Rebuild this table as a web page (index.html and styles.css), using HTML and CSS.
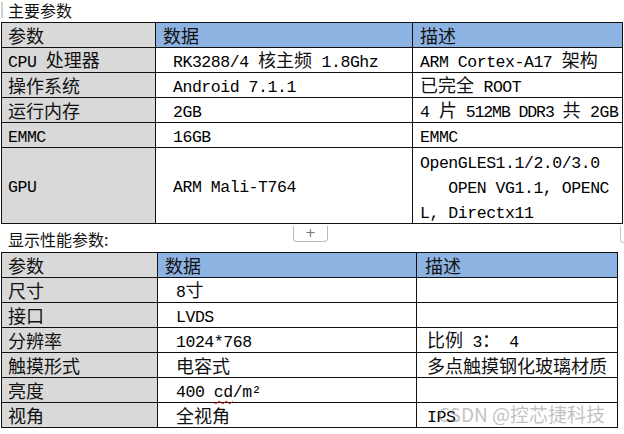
FILE: index.html
```html
<!DOCTYPE html>
<html lang="zh">
<head>
<meta charset="utf-8">
<title>参数</title>
<link rel="stylesheet" href="styles.css">
</head>
<body>
<div class="page">
  <div class="label first"><span class="bar"></span>主要参数</div>
  <table class="spec t1">
    <colgroup><col class="c1"><col class="c2"><col class="c3"></colgroup>
    <tr class="head"><th>参数</th><th>数据</th><th>描述</th></tr>
    <tr>
      <td class="k"><span class="en">CPU </span>处理器</td>
      <td class="v"><span class="en">RK3288/4 </span>核主频<span class="en"> 1.8Ghz</span></td>
      <td class="d"><span class="en">ARM Cortex-A17 </span>架构</td>
    </tr>
    <tr>
      <td class="k">操作系统</td>
      <td class="v"><span class="en">Android 7.1.1</span></td>
      <td class="d">已完全<span class="en"> ROOT</span></td>
    </tr>
    <tr>
      <td class="k">运行内存</td>
      <td class="v"><span class="en">2GB</span></td>
      <td class="d"><span class="en">4 </span>片<span class="en n"> 512MB DDR3 </span>共<span class="en"> 2GB</span></td>
    </tr>
    <tr>
      <td class="k"><span class="en">EMMC</span></td>
      <td class="v"><span class="en">16GB</span></td>
      <td class="d"><span class="en">EMMC</span></td>
    </tr>
    <tr class="tall">
      <td class="k"><span class="en">GPU</span></td>
      <td class="v"><span class="en">ARM Mali-T764</span></td>
      <td class="d multi"><span class="en">OpenGLES1.1/2.0/3.0</span><br><span class="en">   OPEN VG1.1, OPENC</span><br><span class="en">L, Directx11</span></td>
    </tr>
  </table>
  <div class="label second">显示性能参数:<span class="add">+</span><span class="edge"></span></div>
  <div class="wrap2">
    <table class="spec t2">
      <colgroup><col class="c1"><col class="c2"><col class="c3"></colgroup>
      <tr class="head"><th>参数</th><th>数据</th><th>描述</th></tr>
      <tr><td class="k">尺寸</td><td class="v"><span class="en">8</span>寸</td><td class="d"></td></tr>
      <tr><td class="k">接口</td><td class="v"><span class="en">LVDS</span></td><td class="d"></td></tr>
      <tr><td class="k">分辨率</td><td class="v"><span class="en">1024*768</span></td><td class="d">比例<span class="en"> 3</span>：<span class="en"> 4</span></td></tr>
      <tr><td class="k">触摸形式</td><td class="v">电容式</td><td class="d">多点触摸钢化玻璃材质</td></tr>
      <tr><td class="k">亮度</td><td class="v"><span class="en">400 <span class="typo">cd</span>/m²</span></td><td class="d"></td></tr>
      <tr><td class="k">视角</td><td class="v">全视角</td><td class="d"><span class="en">IPS</span></td></tr>
    </table>
    <div class="watermark">CSDN @控芯捷科技</div>
  </div>
</div>
</body>
</html>
```

FILE: styles.css
```css
html, body {
  margin: 0;
  padding: 0;
  background: #ffffff;
}

body {
  font-family: "Noto Sans CJK SC", sans-serif;
  color: #111;
  width: 624px;
  height: 434px;
  overflow: hidden;
}

.page {
  display: flex;
  flex-direction: column;
}

.label {
  position: relative;
  font-size: 16px;
  line-height: 20px;
  padding-left: 8px;
  color: #111;
}

.label.first {
  height: 22px;
}

.label.first .bar {
  position: absolute;
  left: 1px;
  top: 2px;
  width: 2px;
  height: 16px;
  background: #d0d0d0;
}

.label.second {
  height: 28px;
  padding-top: 5px;
  box-sizing: border-box;
}

.add {
  position: absolute;
  left: 293px;
  top: 2px;
  width: 33px;
  height: 15px;
  border: 1px solid #b8b8b8;
  border-top: none;
  border-radius: 0 0 4px 4px;
  color: #777;
  font-family: "DejaVu Sans", sans-serif;
  font-size: 13px;
  line-height: 14px;
  text-align: center;
  background: #fff;
}

.edge {
  position: absolute;
  left: 620px;
  top: 2px;
  width: 3px;
  height: 16px;
  border-left: 1px solid #c8c8c8;
  border-bottom: 1px solid #c8c8c8;
  border-radius: 0 0 0 3px;
}

.spec {
  border-collapse: collapse;
  table-layout: fixed;
  margin-left: 1px;
  font-size: 18px;
}

.t1 { width: 621px; }
.t1 .c1 { width: 154px; }
.t1 .c2 { width: 257px; }
.t1 .c3 { width: 210px; }

.t2 { width: 616px; }
.t2 .c1 { width: 156px; }
.t2 .c2 { width: 259px; }
.t2 .c3 { width: 201px; }

.spec th,
.spec td {
  border: 1px solid #111;
  height: 24px;
  padding: 0;
  line-height: 20px;
  text-align: left;
  vertical-align: middle;
  white-space: nowrap;
  font-weight: normal;
  color: #111;
}

.spec .head th {
  background: #8db3e2;
}

.spec th:first-child,
.spec td.k {
  background: #d9d9d9;
  padding-left: 6px;
}

.spec th:nth-child(2) { padding-left: 7px; }
.spec th:nth-child(3) { padding-left: 7px; }

.t1 td.v { padding-left: 17px; }
.t1 td.d { padding-left: 7px; }

.t2 td.v { padding-left: 18px; }
.t2 td.d { padding-left: 10px; }
.t2 th:nth-child(3) { padding-left: 8px; }

.spec tr.tall td {
  height: 74px;
}

.spec td.multi {
  white-space: pre;
  line-height: 25px;
}

.en {
  font-family: "Liberation Mono", "Noto Sans CJK SC", monospace;
  font-size: 16.5px;
  letter-spacing: -0.45px;
  line-height: 1;
  color: #000;
}

.en.n {
  letter-spacing: -1.1px;
}

.typo {
  text-decoration: underline wavy #d02020;
  text-decoration-thickness: 1px;
  text-underline-offset: 3px;
}

.wrap2 {
  position: relative;
}

.watermark {
  position: absolute;
  left: 438px;
  top: 152px;
  font-family: "Noto Sans CJK SC", sans-serif;
  font-size: 19px;
  line-height: 20px;
  color: rgba(130, 130, 130, 0.5);
  white-space: nowrap;
  pointer-events: none;
}
```
